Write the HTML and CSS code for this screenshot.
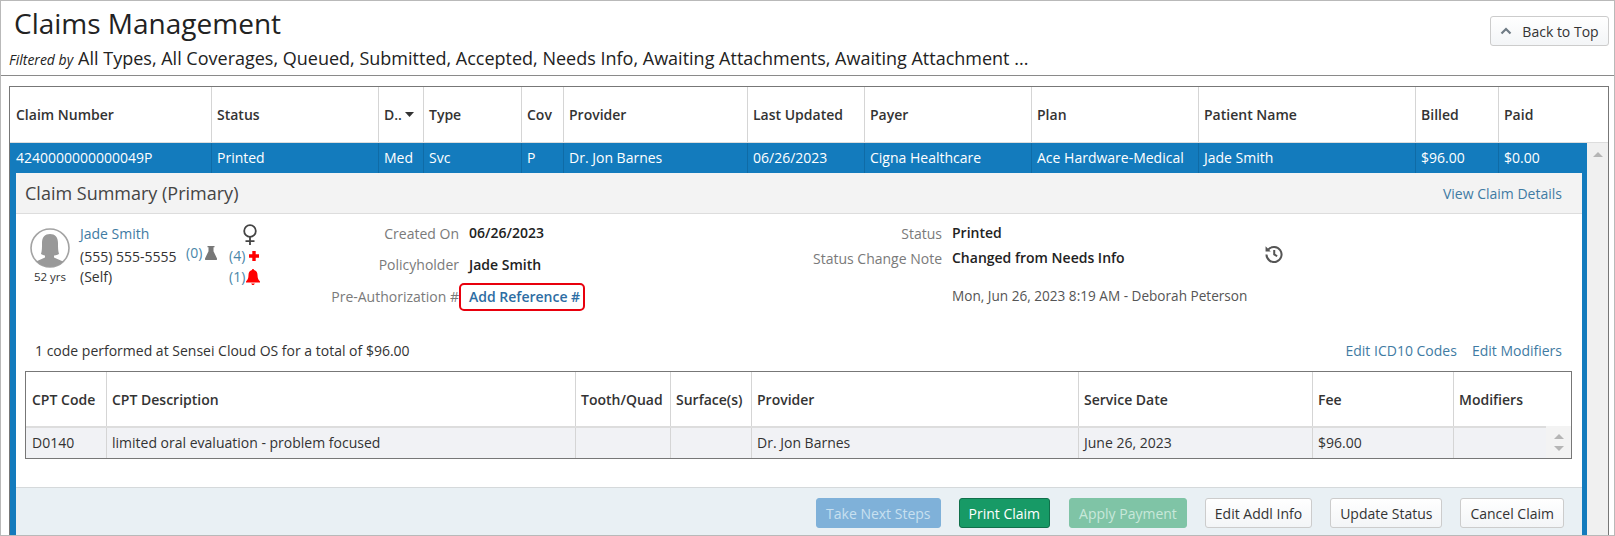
FILE: index.html
```html
<!DOCTYPE html>
<html lang="en">
<head>
<meta charset="utf-8">
<title>Claims Management</title>
<link rel="stylesheet" href="styles.css">
</head>
<body>
<div class="page">
  <header class="top">
    <div class="titles">
      <h1>Claims Management</h1>
      <p class="filter"><em>Filtered by</em><span>All Types, All Coverages, Queued, Submitted, Accepted, Needs Info, Awaiting Attachments, Awaiting Attachment ...</span></p>
    </div>
    <button class="btn back"><svg width="12" height="8" viewBox="0 0 12 8"><path d="M1.500 6.500 6 2l4.500 4.500" fill="none" stroke="#6f7b85" stroke-width="2.200"/></svg>Back to Top</button>
  </header>
  <div class="gridwrap">
    <div class="grid">
      <div class="cols head">
        <div>Claim Number</div><div>Status</div><div>D.. <svg class="caret" width="9" height="5" viewBox="0 0 9 5"><path d="M0 0h9L4.500 5z" fill="#333"/></svg></div><div>Type</div><div>Cov</div><div>Provider</div><div>Last Updated</div><div>Payer</div><div>Plan</div><div>Patient Name</div><div>Billed</div><div>Paid</div>
      </div>
      <div class="gridbody">
        <div class="rows">
          <div class="cols selected">
            <div>4240000000000049P</div><div>Printed</div><div>Med</div><div>Svc</div><div>P</div><div>Dr. Jon Barnes</div><div>06/26/2023</div><div>Cigna Healthcare</div><div>Ace Hardware-Medical</div><div>Jade Smith</div><div>$96.00</div><div>$0.00</div>
          </div>
          <div class="detail">
            <div class="sumhead"><h2>Claim Summary (Primary)</h2><a class="link" href="#">View Claim Details</a></div>
            <div class="sumbody">
              <div class="patient">
                <div class="avatar">
                  <svg width="40" height="40" viewBox="0 0 40 40"><defs><clipPath id="av"><circle cx="20" cy="20" r="19"/></clipPath></defs><circle cx="20" cy="20" r="19" fill="#fff" stroke="#a3a3a3" stroke-width="1.600"/><g clip-path="url(#av)" fill="#999"><path d="M11 26c1-3 1-7 1-11 0-6 3-9 8-9s8 3 8 9c0 4 0 8 1 11-2 1-5 1.500-5 1.500v2l9 4v8H6v-8l9-4v-2s-2-.5-4-1.500z"/></g></svg>
                  <span>52 yrs</span>
                </div>
                <div class="pinfo">
                  <a class="link name" href="#">Jade Smith</a>
                  <div class="phone">(555) 555-5555</div>
                  <div>(Self)</div>
                </div>
                <div class="flask"><span>(0)</span><svg width="12" height="14" viewBox="0 0 12 14"><path d="M2.500 0h7v1.200H8.500v4L12 12.500c.3.800-.2 1.500-1 1.500H1c-.8 0-1.300-.7-1-1.500L3.500 5.200v-4H2.500z" fill="#777"/></svg></div>
                <div class="alerts">
                  <svg class="female" width="16" height="21" viewBox="0 0 16 21"><g fill="none" stroke="#444" stroke-width="1.800"><circle cx="8" cy="7" r="5.800"/><path d="M8 13v8M3.500 17.200h9"/></g></svg>
                  <div class="alert plus"><span>(4)</span><svg width="10" height="10" viewBox="0 0 10 10"><path d="M3.300 0h3.400v3.300H10v3.400H6.700V10H3.300V6.700H0V3.300h3.300z" fill="#f00"/></svg></div>
                  <div class="alert"><span>(1)</span><svg width="14" height="16" viewBox="0 0 14 16"><path d="M7 0c.7 0 1 .5 1 1.100C10.400 1.600 11.500 3.600 11.500 6c0 3.500 1 5 2.500 6.500V13.500H0v-1C1.500 11 2.500 9.500 2.500 6 2.500 3.600 3.600 1.600 6 1.100 6 .5 6.300 0 7 0zM5.200 14.500h3.600C8.600 15.400 7.900 16 7 16s-1.600-.6-1.800-1.500z" fill="#f00"/></svg></div>
                </div>
              </div>
              <div class="fields left">
                <div class="lbl">Created On</div><div class="val">06/26/2023</div>
                <div class="lbl">Policyholder</div><div class="val">Jade Smith</div>
                <div class="lbl">Pre-Authorization #</div><div class="val"><a class="refbox" href="#">Add Reference #</a></div>
              </div>
              <div class="fields right">
                <div class="lbl">Status</div><div class="val">Printed</div><div></div>
                <div class="lbl">Status Change Note</div><div class="val">Changed from Needs Info</div>
                <div class="hist"><svg width="18" height="18" viewBox="0 0 16 16"><g fill="none" stroke="#555" stroke-width="1.800"><path d="M2.800 4.200A6.700 6.700 0 1 1 1.300 8.500"/><path d="M8.200 4.400v4l2.600 1.600"/></g><path d="M.5 1.200v4.600h4.600z" fill="#555"/></svg></div>
                <div class="audit">Mon, Jun 26, 2023 8:19 AM - Deborah Peterson</div>
              </div>
            </div>
            <div class="codeline"><span>1 code performed at Sensei Cloud OS for a total of $96.00</span><div class="codelinks"><a class="link" href="#">Edit ICD10 Codes</a><a class="link" href="#">Edit Modifiers</a></div></div>
            <div class="cpt">
              <div class="cptcols cpthead"><div>CPT Code</div><div>CPT Description</div><div>Tooth/Quad</div><div>Surface(s)</div><div>Provider</div><div>Service Date</div><div>Fee</div><div>Modifiers</div></div>
              <div class="cptcols cptrow"><div>D0140</div><div>limited oral evaluation - problem focused</div><div></div><div></div><div>Dr. Jon Barnes</div><div>June 26, 2023</div><div>$96.00</div><div class="mod"><span class="spin"><i class="up"></i><i class="down"></i></span></div></div>
            </div>
            <div class="actions">
              <button class="btn primary off">Take Next Steps</button>
              <button class="btn green print">Print Claim</button>
              <button class="btn green off">Apply Payment</button>
              <button class="btn">Edit Addl Info</button>
              <button class="btn">Update Status</button>
              <button class="btn">Cancel Claim</button>
            </div>
          </div>
        </div>
        <div class="scroll"><i class="up"></i></div>
      </div>
    </div>
  </div>
</div>
</body>
</html>
```
FILE: styles.css
```css
* { box-sizing: border-box; }
html, body { margin: 0; padding: 0; background: #fff; }
body { font-family: "Open Sans", sans-serif; font-size: 14px; color: #333; }
a { text-decoration: none; }
.page { width: 1615px; height: 536px; border: 1px solid #b9b9b9; display: flex; flex-direction: column; overflow: hidden; }
.top { height: 75px; flex: none; border-bottom: 1px solid #8a8a8a; display: flex; justify-content: space-between; align-items: flex-start; }
.titles { padding-left: 8px; }
h1 { margin: 3px 0 0 5px; font-size: 28px; font-weight: 400; line-height: 38px; color: #222; }
.filter { margin: 5px 0 0; line-height: 22px; font-size: 18px; color: #222; white-space: nowrap; }
.filter em { font-size: 14px; margin-right: 5px; }
.btn { height: 30px; padding: 0 9px; font: 14px "Open Sans", sans-serif; color: #333; border: 1px solid #ccc; border-radius: 3px; background: linear-gradient(#fff, #f3f5f7); white-space: nowrap; }
.back { height: 30px; width: 119px; margin: 15px 5px 0 0; display: flex; align-items: center; justify-content: center; gap: 10px; padding: 0; }
.gridwrap { flex: 1; min-height: 0; padding: 10px 5px 0 8px; }
.grid { height: 100%; border: 1px solid #777; border-bottom: 0; display: flex; flex-direction: column; }
.cols { display: grid; grid-template-columns: 202px 167px 45px 98px 42px 184px 117px 167px 167px 217px 83px 1fr; }
.cols > div { padding: 0 5px; white-space: nowrap; overflow: hidden; display: flex; align-items: center; }
.cols > div:first-child { padding-left: 6px; }
.head { height: 56px; flex: none; font-weight: 600; color: #333; border-bottom: 1px solid #ddd; }
.head > div { border-right: 1px solid #d5d5d5; }
.head > div:last-child { border-right: 0; }
.caret { margin-left: 3px; }
.gridbody { flex: 1; display: flex; min-height: 0; }
.rows { flex: 1; min-width: 0; }
.selected { height: 30px; background: #137bbd; color: #fff; }
.selected > div { border-right: 1px solid #0f6ba6; padding-bottom: 2px; }
.selected > div:last-child { border-right: 0; }
.scroll { width: 21px; flex: none; background: #f0f0f0; padding-top: 9px; display: flex; justify-content: center; align-items: flex-start; }
.up, .down { display: block; width: 0; height: 0; border-left: 5px solid transparent; border-right: 5px solid transparent; }
.up { border-bottom: 5px solid #b5b5b5; }
.down { border-top: 5px solid #b5b5b5; }
.detail { border-left: 6px solid #137bbd; border-right: 5px solid #137bbd; background: #fff; }
.sumhead { height: 41px; background: #f3f3f3; border-bottom: 1px solid #ddd; display: flex; justify-content: space-between; align-items: center; padding: 0 20px 0 9px; }
h2 { margin: 0; font-size: 18px; font-weight: 400; color: #444; }
.link { color: #3f7ba3; }
.sumbody { height: 123px; display: flex; padding: 8px 0 0 14px; }
.patient { width: 245px; flex: none; display: flex; align-items: flex-start; }
.avatar { width: 40px; flex: none; margin-top: 6px; display: flex; flex-direction: column; align-items: center; font-size: 11.500px; line-height: 16px; }
.avatar svg { display: block; margin-bottom: 1px; }
.pinfo { margin-left: 10px; padding-top: 1px; width: 106px; flex: none; line-height: 19.500px; white-space: nowrap; }
.name { display: block; margin-bottom: 2px; line-height: 22px; }
.flask { display: flex; align-items: center; gap: 3px; margin-top: 21px; color: #4a86a8; line-height: 20px; width: 43px; flex: none; }
.alerts { flex: none; }
.alert { display: flex; align-items: center; gap: 1px; color: #4a86a8; line-height: 20px; height: 20.500px; }
.alert.plus { gap: 4px; }
.female { display: block; margin: 2px 0 1px 13px; }
.fields { display: grid; align-items: center; align-content: start; }
.fields .lbl { text-align: right; color: #7a7a7a; white-space: nowrap; }
.val { font-weight: 600; color: #222; white-space: nowrap; padding-bottom: 1px; }
.left { width: 414px; flex: none; grid-template-columns: 184px 1fr; column-gap: 10px; grid-auto-rows: 22px; row-gap: 9.500px; }
.refbox { display: inline-block; margin: 3px 0 0 -10px; height: 28px; line-height: 24px; padding: 0 3px 0 8px; border: 2.500px solid #e8000d; border-radius: 5px; color: #2d6da3; }
.right { flex: 1; grid-template-columns: 253px 303px 18px; column-gap: 10px; grid-template-rows: 22px 22px 22px; row-gap: 3px; }
.hist { display: flex; margin-top: -8px; }
.audit { grid-column: 2 / 4; margin-top: 24px; font-size: 13.600px; color: #555; white-space: nowrap; }
.codeline { height: 34px; display: flex; justify-content: space-between; align-items: center; padding: 0 20px 8px 19px; }
.codelinks { display: flex; gap: 15px; padding-top: 1px; }
.cpt { margin: 0 10px 0 9px; border: 1px solid #777; height: 88px; }
.cptcols { display: grid; grid-template-columns: 81px 469px 95px 81px 327px 234px 141px 1fr; }
.cptcols > div { padding: 0 5px; border-right: 1px solid #d5d5d5; display: flex; align-items: center; white-space: nowrap; }
.cptcols > div:first-child { padding-left: 6px; }
.cptcols > div:last-child { border-right: 0; }
.cpthead { height: 56px; font-weight: 600; border-bottom: 2px solid #ddd; }
.cptrow { height: 30px; background: #f1f2f5; }
.cptrow > div { height: 30px; padding-bottom: 2px; }
.mod { justify-content: flex-end; }
.cptrow > .mod { padding: 0; }
.spin { width: 25px; height: 32px; margin-top: -2px; background: #f3f3f3; display: flex; flex-direction: column; align-items: center; justify-content: center; gap: 7px; }
.actions { margin-top: 28px; height: 49px; background: #e9f0f4; border-top: 1px solid #d5d9db; display: flex; justify-content: flex-end; gap: 18px; padding: 10px 18px 0 0; }
.primary.off { background: #7fb1d9; border-color: #7fb1d9; color: #c8e0f0; }
.green { background: #179a66; border-color: #10704b; color: #fff; }
.green.print { margin-right: 1px; }
.green.off { background: #7fc4a6; border-color: #7fc4a6; color: #c8e8da; }
```
